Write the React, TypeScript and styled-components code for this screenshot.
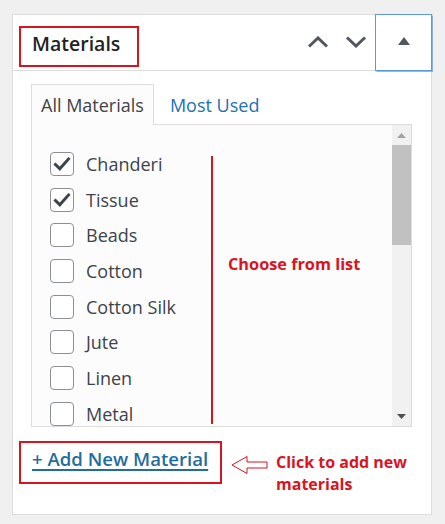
import React from "react";
import styled, { createGlobalStyle } from "styled-components";

const GlobalStyle = createGlobalStyle`
  html, body { margin: 0; padding: 0; }
  body {
    background: #f0f0f1;
    font-family: "Open Sans", "Noto Sans", sans-serif;
    color: #3c434a;
  }
`;

const RED = "#d9141f";

const Page = styled.div`
  padding: 14px 0 0 12px;
`;

const Panel = styled.section`
  width: 420px;
  box-sizing: border-box;
  border: 1px solid #dcdcde;
  background: #fff;
`;

const Header = styled.header`
  display: flex;
  align-items: flex-start;
  height: 56px;
  box-sizing: border-box;
  border-bottom: 1px solid #dcdcde;
`;

const TitleBox = styled.div`
  margin: 11px 0 0 6px;
  width: 120px;
  height: 41px;
  box-sizing: border-box;
  border: 2px solid ${RED};
  display: flex;
  align-items: center;
  padding: 0 0 5px 11px;
`;

const Title = styled.h2`
  margin: 0;
  font-size: 19.5px;
  font-weight: 600;
  color: #1d2327;
  line-height: 1;
`;

const Spacer = styled.div`
  flex: 1;
`;

const OrderButton = styled.button`
  width: 38px;
  height: 55px;
  border: 0;
  background: transparent;
  padding: 0 0 2px;
  display: flex;
  align-items: center;
  justify-content: center;
  color: #50575e;
`;

const Toggle = styled.button`
  width: 57px;
  height: 57px;
  margin: -1px -1px 0 0;
  box-sizing: border-box;
  border: 1px solid #5b9bd5;
  box-shadow: 0 0 1px 0.5px rgba(91, 155, 213, 0.7);
  background: #fff;
  padding: 0 0 4px;
  display: flex;
  align-items: center;
  justify-content: center;
`;

const Body = styled.div`
  padding: 13px 19px 19px 18px;
`;

const Tabs = styled.div`
  display: flex;
  align-items: flex-end;
  height: 40px;
`;

const Tab = styled.div<{ $active?: boolean }>`
  height: 41px;
  box-sizing: border-box;
  line-height: 40px;
  font-size: 18px;
  padding: 0 ${(p) => (p.$active ? "9px" : "15px")};
  margin-bottom: -1px;
  position: relative;
  z-index: 1;
  border: 1px solid ${(p) => (p.$active ? "#dcdcde" : "transparent")};
  border-bottom: 0;
  background: ${(p) => (p.$active ? "#fcfcfc" : "transparent")};
  color: ${(p) => (p.$active ? "#3c434a" : "#2271b1")};
`;

const ListBox = styled.div`
  position: relative;
  display: flex;
  height: 303px;
  box-sizing: border-box;
  border: 1px solid #dcdcde;
  background: #fcfcfc;
`;

const Items = styled.ul`
  list-style: none;
  margin: 0;
  flex: 1;
  padding: 21px 0 0 18px;
  overflow: hidden;
`;

const Row = styled.li`
  display: flex;
  align-items: center;
  height: 35.7px;
`;

const Box = styled.span`
  width: 24px;
  height: 24px;
  box-sizing: border-box;
  border: 1px solid #8c8f94;
  border-radius: 4px;
  background: #fff;
  display: flex;
  align-items: center;
  justify-content: center;
  flex: none;
`;

const Label = styled.span`
  margin-left: 12px;
  font-size: 18px;
  color: #3c434a;
`;

const Scrollbar = styled.div`
  width: 19px;
  display: flex;
  flex-direction: column;
  background: #f1f1f1;
`;

const ScrollArrow = styled.div`
  height: 20px;
  display: flex;
  align-items: center;
  justify-content: center;
`;

const Thumb = styled.div`
  height: 100px;
  background: #c1c1c1;
`;

const Track = styled.div`
  flex: 1;
`;

const AnnotLine = styled.div`
  position: absolute;
  left: 179px;
  top: 31px;
  width: 2px;
  height: 268px;
  background: ${RED};
`;

const AnnotText = styled.div`
  position: absolute;
  left: 196px;
  top: 128px;
  font-size: 16.3px;
  font-weight: 700;
  color: ${RED};
  white-space: nowrap;
`;

const Footer = styled.div`
  display: flex;
  align-items: flex-start;
  margin-top: 14px;
`;

const LinkBox = styled.div`
  margin-left: -12px;
  width: 203px;
  height: 43px;
  box-sizing: border-box;
  border: 2px solid ${RED};
  padding: 3px 0 0 11px;
`;

const AddLink = styled.a`
  font-size: 18.6px;
  font-weight: 600;
  color: #1f6e9e;
  text-decoration: underline;
  text-decoration-thickness: 1.5px;
  text-underline-offset: 3px;
  white-space: nowrap;
`;

const Pointer = styled.svg`
  margin: 14px 0 0 9px;
  flex: none;
`;

const Note = styled.div`
  margin: 10px 0 0 8px;
  font-size: 16px;
  font-weight: 700;
  line-height: 22px;
  color: ${RED};
`;

const materials = [
  { name: "Chanderi", checked: true },
  { name: "Tissue", checked: true },
  { name: "Beads" },
  { name: "Cotton" },
  { name: "Cotton Silk" },
  { name: "Jute" },
  { name: "Linen" },
  { name: "Metal" },
];

function Check() {
  return (
    <svg width="18" height="18" viewBox="0 0 18 18">
      <path d="M2.5 9.5 L6.8 13.8 L15.5 4" fill="none" stroke="#3c434a" strokeWidth="3" strokeLinecap="square" />
    </svg>
  );
}

function Chevron({ up }: { up?: boolean }) {
  return (
    <svg width="22" height="12" viewBox="0 0 22 12">
      <path
        d={up ? "M2 10.5 L11 2 L20 10.5" : "M2 1.5 L11 10 L20 1.5"}
        fill="none"
        stroke="#50575e"
        strokeWidth="3"
      />
    </svg>
  );
}

export default function App() {
  return (
    <>
      <GlobalStyle />
      <Page>
        <Panel>
          <Header>
            <TitleBox>
              <Title>Materials</Title>
            </TitleBox>
            <Spacer />
            <OrderButton aria-label="Move up">
              <Chevron up />
            </OrderButton>
            <OrderButton aria-label="Move down">
              <Chevron />
            </OrderButton>
            <Toggle aria-label="Toggle panel">
              <svg width="12" height="8" viewBox="0 0 12 8">
                <path d="M0 8 L6 0 L12 8 Z" fill="#50575e" />
              </svg>
            </Toggle>
          </Header>
          <Body>
            <Tabs>
              <Tab $active>All Materials</Tab>
              <Tab>Most Used</Tab>
            </Tabs>
            <ListBox>
              <Items>
                {materials.map((m) => (
                  <Row key={m.name}>
                    <Box>{m.checked && <Check />}</Box>
                    <Label>{m.name}</Label>
                  </Row>
                ))}
              </Items>
              <Scrollbar>
                <ScrollArrow>
                  <svg width="9" height="5" viewBox="0 0 9 5">
                    <path d="M0 5 L4.5 0 L9 5 Z" fill="#a3a3a3" />
                  </svg>
                </ScrollArrow>
                <Thumb />
                <Track />
                <ScrollArrow>
                  <svg width="9" height="5" viewBox="0 0 9 5">
                    <path d="M0 0 L4.5 5 L9 0 Z" fill="#505050" />
                  </svg>
                </ScrollArrow>
              </Scrollbar>
              <AnnotLine />
              <AnnotText>Choose from list</AnnotText>
            </ListBox>
            <Footer>
              <LinkBox>
                <AddLink href="#">+ Add New Material</AddLink>
              </LinkBox>
              <Pointer width="37" height="20" viewBox="0 0 37 20">
                <path
                  d="M1 10 L16 1.5 L16 7 L36 7 L36 13 L16 13 L16 18.5 Z"
                  fill="#fff"
                  stroke={RED}
                  strokeWidth="1"
                />
              </Pointer>
              <Note>
                Click to add new
                <br />
                materials
              </Note>
            </Footer>
          </Body>
        </Panel>
      </Page>
    </>
  );
}
